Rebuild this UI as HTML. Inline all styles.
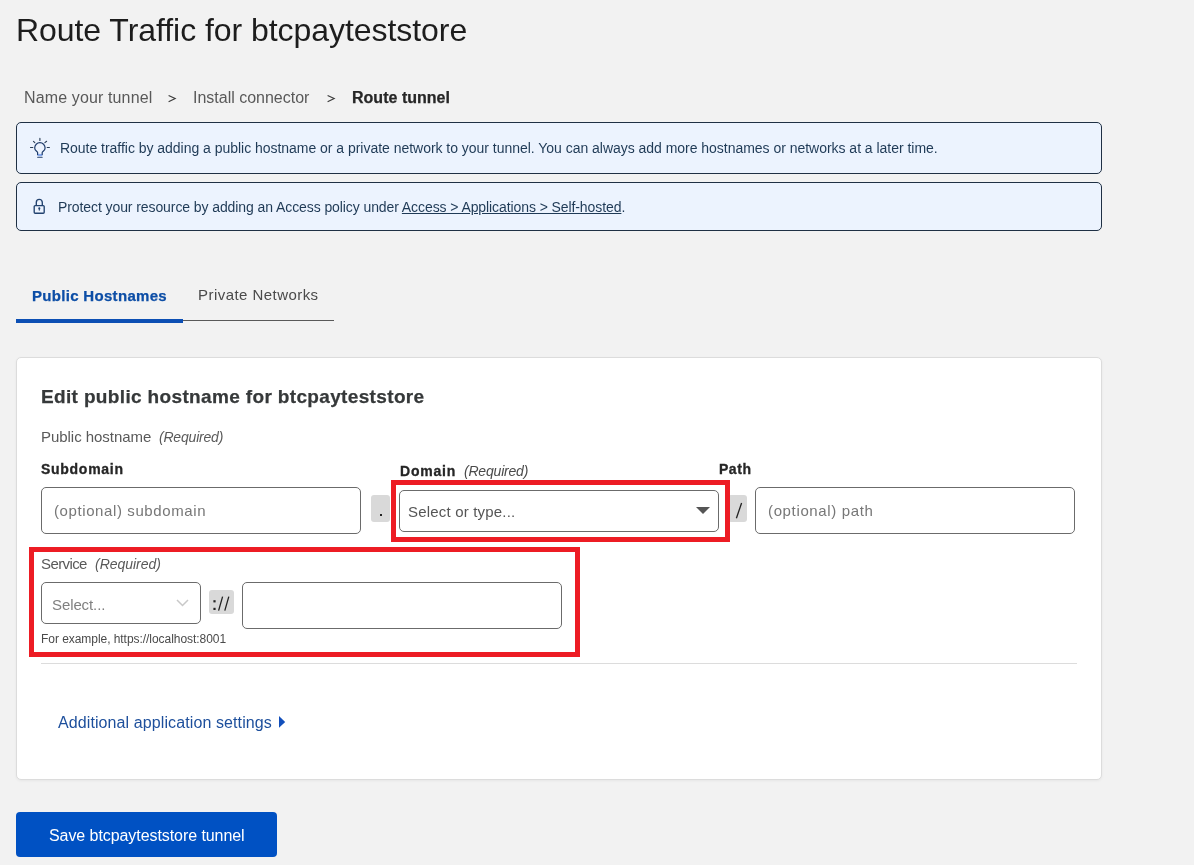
<!DOCTYPE html>
<html>
<head>
<meta charset="utf-8">
<style>
html,body{margin:0;padding:0;}
body{width:1194px;height:865px;overflow:hidden;background:#f2f2f2;position:relative;font-family:"Liberation Sans",sans-serif;}
.t{will-change:transform;position:absolute;white-space:nowrap;line-height:1;}
.box{position:absolute;box-sizing:border-box;}
</style>
</head>
<body>
<!-- Title -->
<div class="t" id="title" style="left:16px;top:14px;font-size:32px;letter-spacing:-0.055px;color:#1d1d1d;">Route Traffic for btcpayteststore</div>

<!-- Breadcrumb -->
<div class="t" id="bc1" style="left:24px;top:90px;font-size:16px;color:#595959;letter-spacing:0.130px;">Name your tunnel</div>
<svg class="box" style="left:165px;top:92px;" width="14" height="13" viewBox="0 0 14 13"><path d="M3.6 3.4L10.2 6.6L3.6 9.8" fill="none" stroke="#3a3a3a" stroke-width="1.15"/></svg>
<div class="t" id="bc3" style="left:193px;top:90px;font-size:16px;letter-spacing:-0.010px;color:#595959;">Install connector</div>
<svg class="box" style="left:324px;top:92px;" width="14" height="13" viewBox="0 0 14 13"><path d="M3.6 3.4L10.2 6.6L3.6 9.8" fill="none" stroke="#3a3a3a" stroke-width="1.15"/></svg>
<div class="t" id="bc5" style="left:352px;top:90px;font-size:16px;font-weight:700;letter-spacing:0.020px;color:#262626;-webkit-text-stroke:0.25px #262626;">Route tunnel</div>

<!-- Info boxes -->
<div class="box" style="left:16px;top:122px;width:1086px;height:52px;background:#ecf3fe;border:1px solid #1f3044;border-radius:5px;"></div>
<div class="box" style="left:16px;top:182px;width:1086px;height:49px;background:#ecf3fe;border:1px solid #1f3044;border-radius:5px;"></div>
<svg class="box" style="left:28px;top:136px;" width="24" height="24" viewBox="0 0 24 24" fill="none" stroke-linecap="round">
<path d="M11.9 2.4V4.4M2.5 11.5H4.8M19.2 11.5H21.4M5.5 5.4L6.8 6.6M16.9 6.6L18.6 5.3" stroke="#2a3d55" stroke-width="1.15"/>
<rect x="9.5" y="17.9" width="4.8" height="2.1" fill="#86a8ec"/>
<path d="M9.6 18.6V16.6C9.6 15.4 6.7 14.6 6.7 11.9A5.2 5.2 0 0 1 17.1 11.9C17.1 14.6 14.2 15.4 14.2 16.6V18.6" stroke="#1f3c6b" stroke-width="1.2" stroke-linejoin="round"/>
<path d="M9.7 21.2H14.1" stroke="#1f3c6b" stroke-width="1.15"/>
</svg>
<div class="t" id="info1" style="left:60px;top:141px;font-size:14px;letter-spacing:-0.027px;color:#1f3a56;">Route traffic by adding a public hostname or a private network to your tunnel. You can always add more hostnames or networks at a later time.</div>
<svg class="box" style="left:28px;top:194px;" width="22" height="22" viewBox="0 0 22 22" fill="none">
<rect x="6.2" y="11.6" width="10" height="7.6" rx="1" stroke="#22426f" stroke-width="1.35"/>
<path d="M8.3 11.6V8.4A3 3 0 0 1 14.3 8.4V11.6" stroke="#22426f" stroke-width="1.35"/>
<circle cx="11.3" cy="14.4" r="1.05" fill="#22426f"/>
<rect x="10.8" y="14.4" width="1" height="2.2" fill="#22426f"/>
</svg>
<div class="t" id="info2" style="left:58px;top:200px;font-size:14px;letter-spacing:-0.087px;color:#1f3a56;">Protect your resource by adding an Access policy under <span style="text-decoration:underline;">Access &gt; Applications &gt; Self-hosted</span>.</div>

<!-- Tabs -->
<div class="t" id="tab1" style="left:32px;top:288px;font-size:15px;font-weight:700;letter-spacing:0.310px;color:#0d4ea6;-webkit-text-stroke:0.25px #0d4ea6;">Public Hostnames</div>
<div class="t" id="tab2" style="left:198px;top:287px;font-size:15px;letter-spacing:0.450px;color:#4a4a4a;">Private Networks</div>
<div class="box" style="left:183px;top:320px;width:151px;height:1px;background:#595959;"></div>
<div class="box" style="left:16px;top:319px;width:167px;height:4px;background:#0c4fb4;"></div>

<!-- Card -->
<div class="box" style="left:16px;top:357px;width:1086px;height:423px;background:#fff;border:1px solid #dcdcdc;border-radius:5px;box-shadow:0 1px 3px rgba(0,0,0,0.05);"></div>
<div class="t" id="h2" style="left:41px;top:387px;font-size:19px;font-weight:700;letter-spacing:0.350px;color:#36393a;-webkit-text-stroke:0.25px #36393a;">Edit public hostname for btcpayteststore</div>
<div class="t" id="ph" style="left:41px;top:429px;font-size:15px;letter-spacing:-0.040px;color:#595959;">Public hostname</div>
<div class="t" id="phreq" style="left:159px;top:430px;font-size:14px;font-style:italic;letter-spacing:-0.2px;color:#595959;">(Required)</div>

<div class="t" id="sub" style="left:41px;top:462px;font-size:14px;font-weight:700;letter-spacing:0.720px;color:#262626;-webkit-text-stroke:0.3px #262626;">Subdomain</div>
<div class="box" style="left:41px;top:487px;width:320px;height:47px;border:1px solid #6b6b6b;border-radius:5px;background:#fff;"></div>
<div class="t" id="subph" style="left:54px;top:503px;font-size:15px;letter-spacing:0.600px;color:#777;">(optional) subdomain</div>

<div class="box" style="left:371px;top:495px;width:19px;height:27px;background:#d9d9d9;border-radius:3px;"></div>
<div class="box" style="left:379.5px;top:513.5px;width:2.6px;height:2.6px;background:#222;"></div>

<div class="t" id="dom" style="left:400px;top:464px;font-size:14px;font-weight:700;letter-spacing:0.800px;color:#262626;-webkit-text-stroke:0.3px #262626;">Domain</div>
<div class="t" id="domreq" style="left:464px;top:464px;font-size:14px;font-style:italic;letter-spacing:-0.200px;color:#4a4a4a;">(Required)</div>
<div class="box" style="left:399px;top:490px;width:320px;height:42px;border:1px solid #6b6b6b;border-radius:5px;background:#fff;"></div>
<div class="t" id="sel" style="left:408px;top:504px;font-size:15px;color:#555;letter-spacing:0.190px;">Select or type...</div>
<svg class="box" style="left:696px;top:507px;" width="14" height="7" viewBox="0 0 14 7"><path d="M0 0H14L7 7Z" fill="#555"/></svg>

<div class="box" style="left:728px;top:495px;width:19px;height:27px;background:#d9d9d9;border-radius:3px;"></div>
<svg class="box" style="left:728px;top:495px;" width="19" height="27" viewBox="0 0 19 27"><path d="M13.6 8L8.4 23.2" stroke="#222" stroke-width="1.3"/></svg>

<div class="box" style="left:391px;top:480px;width:339px;height:62px;border:5px solid #ed1c24;"></div>

<div class="t" id="path" style="left:719px;top:462px;font-size:14px;font-weight:700;letter-spacing:0.530px;color:#262626;-webkit-text-stroke:0.3px #262626;">Path</div>
<div class="box" style="left:755px;top:487px;width:320px;height:47px;border:1px solid #6b6b6b;border-radius:5px;background:#fff;"></div>
<div class="t" id="pathph" style="left:768px;top:503px;font-size:15px;letter-spacing:0.640px;color:#777;">(optional) path</div>

<!-- Service -->
<div class="t" id="svc" style="left:41px;top:556px;font-size:15px;letter-spacing:-0.6px;color:#595959;">Service</div>
<div class="t" id="svcreq" style="left:95px;top:557px;font-size:14px;font-style:italic;letter-spacing:-0.020px;color:#595959;">(Required)</div>
<div class="box" style="left:41px;top:582px;width:160px;height:42px;border:1px solid #6b6b6b;border-radius:5px;background:#fff;"></div>
<div class="t" id="sel2" style="left:52px;top:597px;font-size:15px;letter-spacing:-0.100px;color:#808080;">Select...</div>
<svg class="box" style="left:176px;top:599px;" width="13" height="8" viewBox="0 0 13 8"><path d="M1 1L6.5 6.5L12 1" fill="none" stroke="#c8c8c8" stroke-width="1.5"/></svg>
<div class="box" style="left:209px;top:590px;width:25px;height:24px;background:#d9d9d9;border-radius:3px;"></div>
<svg class="box" style="left:209px;top:590px;" width="25" height="24" viewBox="0 0 25 24"><rect x="4.4" y="10.2" width="2.2" height="2.2" fill="#222"/><rect x="4.4" y="17.8" width="2.2" height="2.2" fill="#222"/><path d="M13.6 6.6L9.6 20.6M19.8 6.6L15.8 20.6" stroke="#222" stroke-width="1.3"/></svg>
<div class="box" style="left:242px;top:582px;width:320px;height:47px;border:1px solid #6b6b6b;border-radius:5px;background:#fff;"></div>
<div class="t" id="ex" style="left:41px;top:633px;font-size:12px;letter-spacing:-0.050px;color:#4a4a4a;">For example, https://localhost:8001</div>

<div class="box" style="left:29px;top:547px;width:551px;height:110px;border:5px solid #ed1c24;"></div>

<div class="box" style="left:41px;top:663px;width:1036px;height:1px;background:#dcdcdc;"></div>

<div class="t" id="add" style="left:58px;top:715px;font-size:16px;color:#1d4f9c;letter-spacing:0.100px;">Additional application settings</div>
<svg class="box" style="left:279px;top:716px;" width="7" height="12" viewBox="0 0 7 12"><path d="M0 0L6.2 5.9L0 11.8Z" fill="#124fbb"/></svg>

<!-- Save button -->
<div class="box" style="left:16px;top:812px;width:261px;height:45px;background:#0051c3;border-radius:4px;"></div>
<div class="t" id="save" style="left:49px;top:828px;font-size:16px;letter-spacing:-0.070px;color:#fff;">Save btcpayteststore tunnel</div>
</body>
</html>
